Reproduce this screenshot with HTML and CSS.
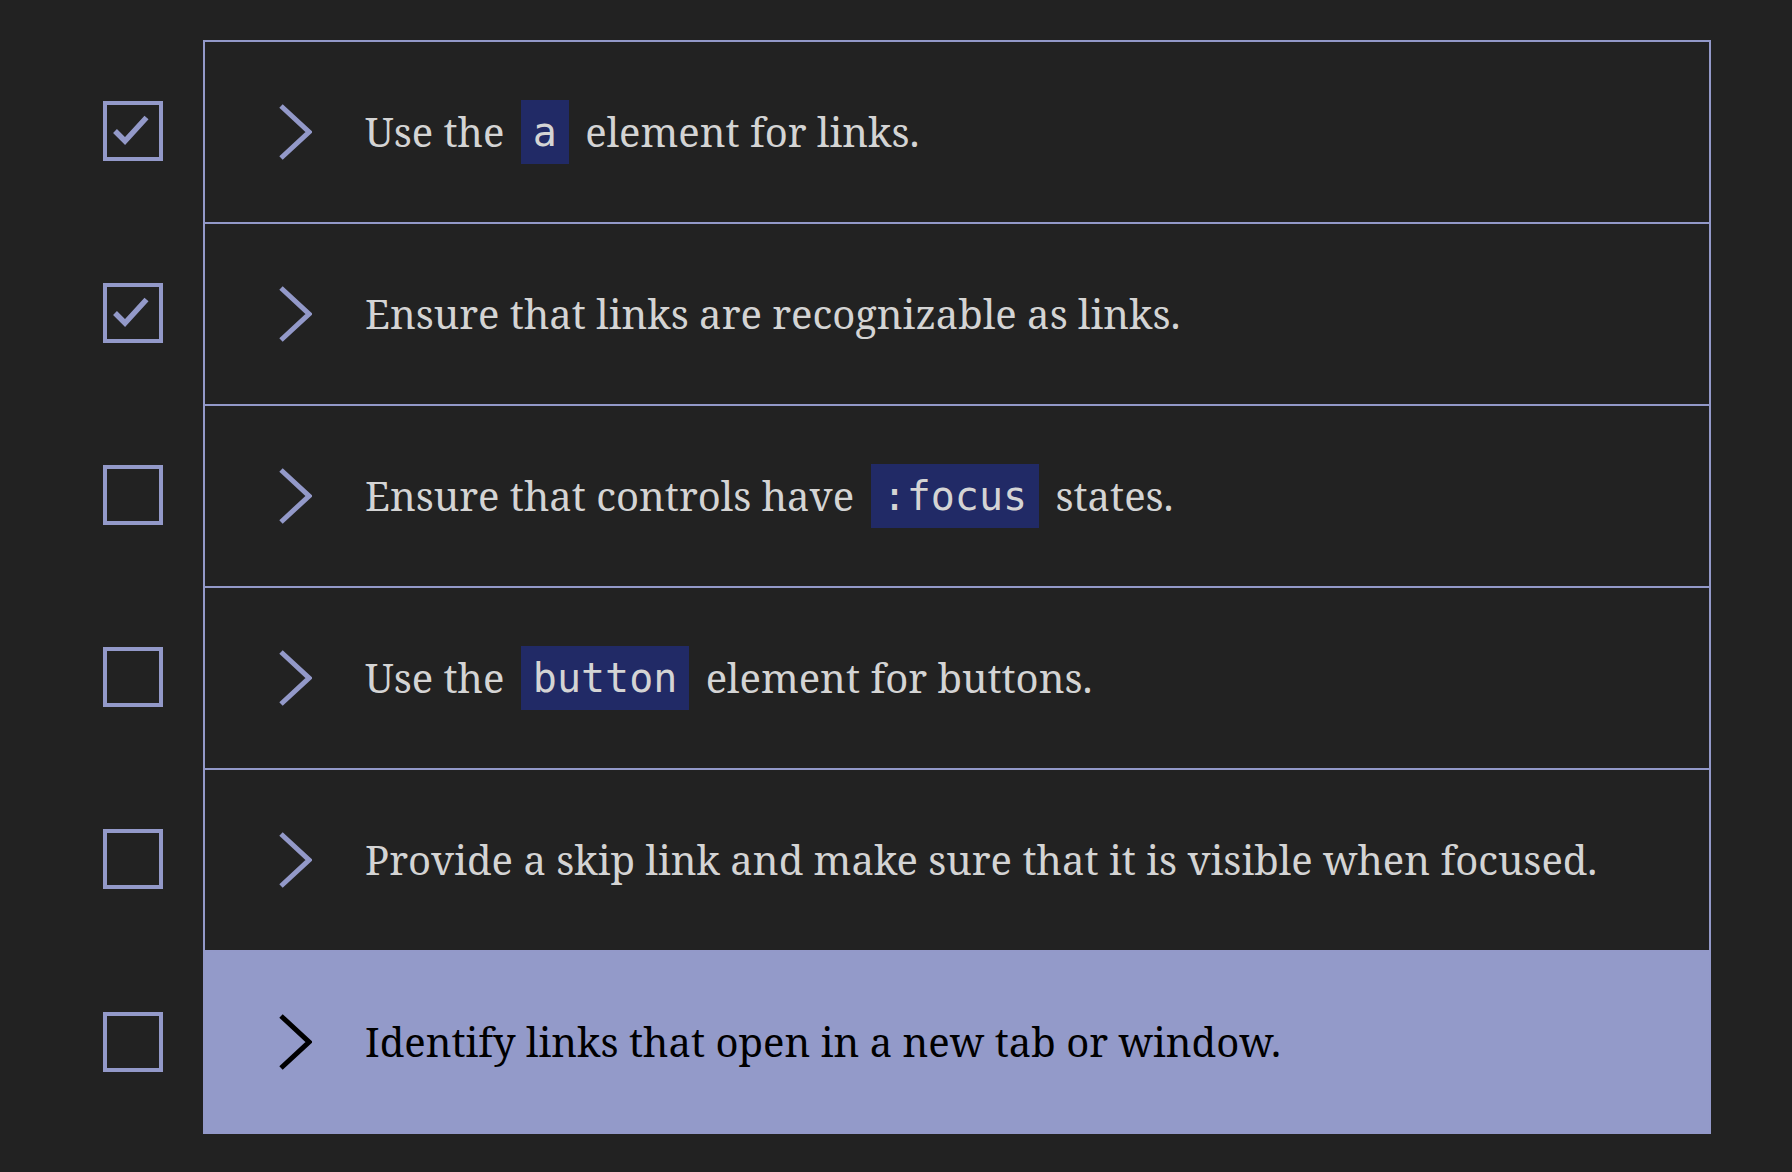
FILE: index.html
```html
<!DOCTYPE html>
<html lang="en">
<head>
<meta charset="utf-8">
<title>Checklist</title>
<link rel="stylesheet" href="styles.css">
</head>
<body>
<ul class="checklist">
  <li class="row">
    <span class="box checked"><svg viewBox="0 0 60 60" width="60" height="60"><path d="M12 30 L22 40 L43.5 16.5" /></svg></span>
    <div class="item first">
      <svg class="chev" viewBox="0 0 34 58" width="34" height="58"><path d="M3 3 L31 29 L3 55" /></svg>
      <span class="label">Use the <code>a</code> element for links.</span>
    </div>
  </li>
  <li class="row">
    <span class="box checked"><svg viewBox="0 0 60 60" width="60" height="60"><path d="M12 30 L22 40 L43.5 16.5" /></svg></span>
    <div class="item">
      <svg class="chev" viewBox="0 0 34 58" width="34" height="58"><path d="M3 3 L31 29 L3 55" /></svg>
      <span class="label">Ensure that links are recognizable as links.</span>
    </div>
  </li>
  <li class="row">
    <span class="box"></span>
    <div class="item">
      <svg class="chev" viewBox="0 0 34 58" width="34" height="58"><path d="M3 3 L31 29 L3 55" /></svg>
      <span class="label">Ensure that controls have <code>:focus</code> states.</span>
    </div>
  </li>
  <li class="row">
    <span class="box"></span>
    <div class="item">
      <svg class="chev" viewBox="0 0 34 58" width="34" height="58"><path d="M3 3 L31 29 L3 55" /></svg>
      <span class="label">Use the <code>button</code> element for buttons.</span>
    </div>
  </li>
  <li class="row">
    <span class="box"></span>
    <div class="item">
      <svg class="chev" viewBox="0 0 34 58" width="34" height="58"><path d="M3 3 L31 29 L3 55" /></svg>
      <span class="label">Provide a skip link and make sure that it is visible when focused.</span>
    </div>
  </li>
  <li class="row">
    <span class="box"></span>
    <div class="item active last">
      <svg class="chev" viewBox="0 0 34 58" width="34" height="58"><path d="M3 3 L31 29 L3 55" /></svg>
      <span class="label">Identify links that open in a new tab or window.</span>
    </div>
  </li>
</ul>
</body>
</html>
```

FILE: styles.css
```css
html, body {
  margin: 0;
  padding: 0;
  background: #222222;
}

body {
  font-family: "Noto Serif", "DejaVu Serif", "Liberation Serif", serif;
  color: #d4d4d4;
}

.checklist {
  list-style: none;
  margin: 0;
  padding: 40px 0 0 103px;
  width: 1608px;
}

.row {
  display: flex;
  align-items: stretch;
  gap: 40px;
}

.box {
  flex: 0 0 auto;
  align-self: center;
  width: 52px;
  height: 52px;
  border: 4px solid #9399c9;
  position: relative;
}

.box svg {
  position: absolute;
  left: -4px;
  top: -4px;
  fill: none;
  stroke: #9399c9;
  stroke-width: 5.5;
}

.item {
  flex: 1 1 auto;
  display: flex;
  align-items: center;
  height: 180px;
  border: 2px solid #9399c9;
  border-bottom: 0;
  padding-left: 73px;
}

.item.last {
  border-bottom: 2px solid #9399c9;
}

.item.active {
  background: #939ac9;
  color: #000000;
}

.chev {
  flex: 0 0 auto;
  fill: none;
  stroke: #9399c9;
  stroke-width: 5;
  margin-right: 53px;
}

.item.active .chev {
  stroke: #000000;
}

.label {
  font-size: 40px;
  line-height: 64px;
  white-space: nowrap;
}

code {
  display: inline-block;
  font-family: "DejaVu Sans Mono", "Liberation Mono", monospace;
  font-size: 40px;
  line-height: 64px;
  padding: 0 12px;
  margin: 0 6px;
  background: #212a66;
  color: #d4d4d4;
  vertical-align: top;
}
```
